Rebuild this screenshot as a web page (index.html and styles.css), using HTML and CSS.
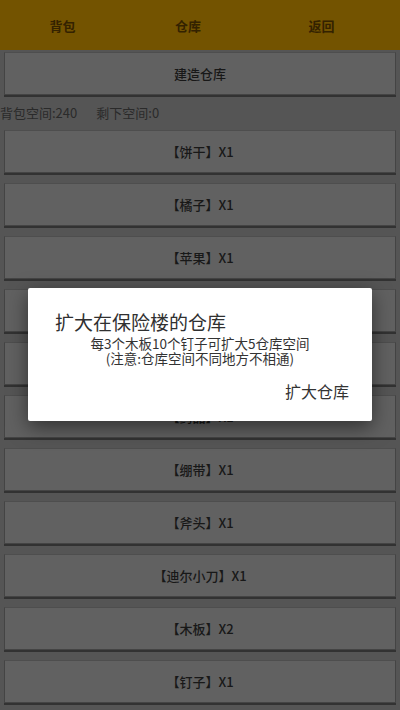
FILE: index.html
```html
<!DOCTYPE html>
<html lang="zh">
<head>
<meta charset="utf-8">
<title>仓库</title>
<link rel="stylesheet" href="styles.css">
</head>
<body>
<div class="screen">
  <header class="topbar">
    <div class="tab">背包</div>
    <div class="tab">仓库</div>
    <div class="tab tab-back">返回</div>
  </header>
  <main class="content">
    <div class="btn">建造仓库</div>
    <div class="info"><span>背包空间:240</span><span>剩下空间:0</span></div>
    <div class="btn">【饼干】X1</div>
    <div class="btn">【橘子】X1</div>
    <div class="btn">【苹果】X1</div>
    <div class="btn">【罐头】X1</div>
    <div class="btn">【矿泉水】X1</div>
    <div class="btn">【药品】X1</div>
    <div class="btn">【绷带】X1</div>
    <div class="btn">【斧头】X1</div>
    <div class="btn">【迪尔小刀】X1</div>
    <div class="btn">【木板】X2</div>
    <div class="btn">【钉子】X1</div>
    <div class="btn"></div>
  </main>
  <div class="dialog">
    <div class="dialog-title">扩大在保险楼的仓库</div>
    <div class="dialog-body">
      <div class="dialog-line">每3个木板10个钉子可扩大5仓库空间</div>
      <div class="dialog-line">(注意:仓库空间不同地方不相通)</div>
    </div>
    <div class="dialog-actions"><span class="dialog-btn">扩大仓库</span></div>
  </div>
</div>
</body>
</html>
```

FILE: styles.css
```css
html, body {
  margin: 0;
  padding: 0;
  background: #555555;
}
body {
  font-family: "Noto Sans CJK SC", "Noto Sans", Roboto, sans-serif;
  width: 400px;
  height: 710px;
  overflow: hidden;
}
.screen {
  position: relative;
  width: 400px;
  height: 710px;
  overflow: hidden;
  background: #555555;
}
.topbar {
  display: grid;
  grid-template-columns: 125px 126px 1fr;
  height: 50px;
  background: #735300;
}
.tab {
  display: flex;
  align-items: center;
  justify-content: center;
  font-size: 13px;
  font-weight: 700;
  color: #332200;
}
.tab-back {
  padding-right: 8px;
}
.content {
  display: flex;
  flex-direction: column;
  padding: 2px 4px 0;
}
.btn {
  box-sizing: border-box;
  height: 43px;
  margin-bottom: 10px;
  display: flex;
  align-items: center;
  justify-content: center;
  background: #616161;
  border: 1px solid #444;
  border-top-color: #4e4e4e;
  box-shadow: 0 2px 0 #323232;
  font-size: 13px;
  font-weight: 500;
  color: #181818;
}
.info {
  display: flex;
  gap: 19px;
  height: 23px;
  line-height: 23px;
  margin: -4px -4px 6px;
  font-size: 13px;
  color: #2a2a2a;
}
.dialog {
  position: absolute;
  left: 28px;
  top: 288px;
  width: 344px;
  height: 133px;
  box-sizing: border-box;
  background: #ffffff;
  border-radius: 2px;
  box-shadow: 0 6px 20px rgba(0, 0, 0, 0.5);
  padding: 23px 23px 0 27px;
}
.dialog-title {
  font-size: 19px;
  line-height: 22px;
  color: #303030;
}
.dialog-body {
  margin-left: -4px;
  margin-top: 3px;
  text-align: center;
  font-size: 13.5px;
  color: #333;
}
.dialog-line {
  line-height: 15px;
}
.dialog-actions {
  display: flex;
  justify-content: flex-end;
  margin-top: 15px;
}
.dialog-btn {
  font-size: 16px;
  line-height: 20px;
  color: #333;
}
```
